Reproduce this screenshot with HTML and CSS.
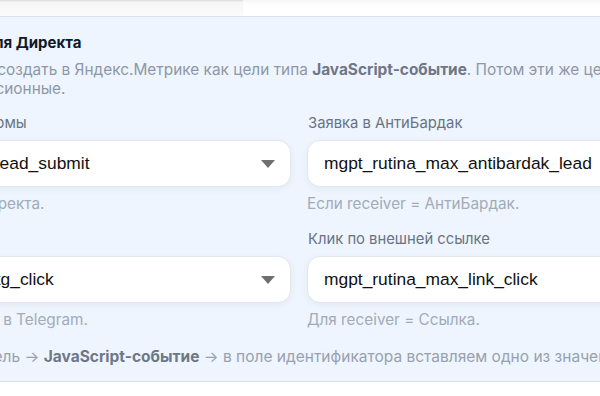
FILE: index.html
```html
<!DOCTYPE html>
<html lang="ru">
<head>
<meta charset="utf-8">
<title>Цели для Директа</title>
<link rel="stylesheet" href="styles.css">
</head>
<body>
<div class="page">
  <div class="top-strip">
    <div class="prev-card"></div>
    <div class="prev-blank"></div>
  </div>
  <section class="panel">
    <h3 class="panel-title">Цели для Директа</h3>
    <p class="panel-desc">Нужно создать в Яндекс.Метрике как цели типа <b>JavaScript-событие</b>. Потом эти же цели выбираются в Директе как<br>конверсионные.</p>
    <div class="grid">
      <div class="field">
        <div class="label">Лид формы</div>
        <div class="select">
          <span class="value">site_lead_submit</span>
          <span class="arrow"></span>
        </div>
        <div class="hint">Для Директа.</div>
      </div>
      <div class="field">
        <div class="label">Заявка в АнтиБардак</div>
        <div class="input"><span class="value">mgpt_rutina_max_antibardak_lead</span></div>
        <div class="hint">Если receiver = АнтиБардак.</div>
      </div>
      <div class="field">
        <div class="label">Клик</div>
        <div class="select">
          <span class="value">site_tg_click</span>
          <span class="arrow"></span>
        </div>
        <div class="hint">Ссылка в Telegram.</div>
      </div>
      <div class="field">
        <div class="label">Клик по внешней ссылке</div>
        <div class="input"><span class="value">mgpt_rutina_max_link_click</span></div>
        <div class="hint">Для receiver = Ссылка.</div>
      </div>
    </div>
    <p class="panel-foot">Своя цель → <b>JavaScript-событие</b> → в поле идентификатора вставляем одно из значений выше.</p>
  </section>
</div>
</body>
</html>
```
FILE: styles.css
```css
html, body {
  margin: 0;
  padding: 0;
  background: #ffffff;
  overflow: hidden;
}
body {
  font-family: Inter, "Noto Sans", sans-serif;
  width: 600px;
  height: 396px;
}
.page {
  margin-left: -74px;
  width: 748px;
}
.top-strip {
  display: flex;
  height: 16px;
}
.prev-card {
  width: 317px;
  background: linear-gradient(#e2e2e2 0, #e2e2e2 1px, #f6f6f6 2px, #fbfbfb 16px);
}
.prev-blank {
  flex: 1;
  background: linear-gradient(#f7f7f7 0, #ffffff 6px);
}
.panel {
  background: #eef5fe;
  border-top: 1px solid #d8e1ec;
  border-bottom: 1px solid #d8e1ec;
  padding: 16px 16px 15px;
}
.panel-title {
  margin: 0;
  font-size: 15px;
  line-height: 20px;
  font-weight: 700;
  color: #111827;
}
.panel-desc {
  margin: 7px 0 0;
  font-size: 15.4px;
  line-height: 19px;
  color: #8e97a6;
  white-space: nowrap;
}
.panel-desc b, .panel-foot b {
  color: #6e7787;
  font-weight: 700;
}
.grid {
  display: grid;
  grid-template-columns: 349px 349px;
  column-gap: 16px;
  row-gap: 17px;
  margin-top: 16px;
}
.field {
  display: flex;
  flex-direction: column;
  min-width: 0;
}
.label {
  font-size: 14.8px;
  line-height: 18px;
  color: #687384;
  padding-left: 1px;
  white-space: nowrap;
}
.select, .input {
  margin-top: 8px;
  height: 47px;
  box-sizing: border-box;
  background: #ffffff;
  border: 1px solid #e3e8ef;
  border-radius: 13px;
  box-shadow: 0 2px 6px rgba(30, 50, 90, 0.06);
  display: flex;
  align-items: center;
  padding: 0 15px 0 16px;
}
.value {
  font-family: "Liberation Sans", Arial, sans-serif;
  font-size: 17.4px;
  color: #111111;
  flex: 1;
  white-space: nowrap;
}
.arrow {
  width: 0;
  height: 0;
  border-left: 7px solid transparent;
  border-right: 7px solid transparent;
  border-top: 8px solid #6f6f6f;
}
.hint {
  margin-top: 8px;
  font-size: 15.3px;
  line-height: 18px;
  color: #a2abb8;
  white-space: nowrap;
}
.panel-foot {
  margin: 19px 0 0;
  font-size: 15.5px;
  line-height: 18px;
  color: #98a1af;
  white-space: nowrap;
}
```
